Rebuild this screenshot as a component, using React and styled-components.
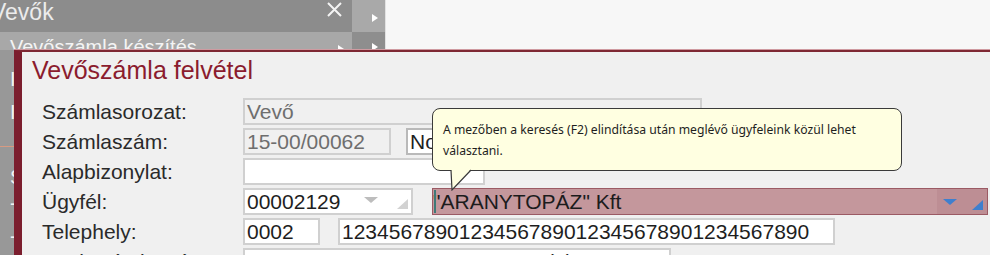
import React from "react"
import styled, { createGlobalStyle } from "styled-components"

//Styles
const GlobalStyle = createGlobalStyle`
  body {
    margin: 0;
    background: #f0f0f0;
  }
`
const Screen = styled.div`
  position: relative;
  width: 990px;
  height: 255px;
  overflow: hidden;
  display: flex;
  flex-direction: column;
  background: #f0f0f0;
  font-family: "Liberation Sans", Arial, sans-serif;
`
const TopBar = styled.div`
  display: flex;
  height: 50px;
  flex-shrink: 0;
`
const MenuPanel = styled.div`
  width: 352px;
  display: flex;
  flex-direction: column;
`
const MenuHeader = styled.div`
  height: 32px;
  background: #8c8c8c;
  display: flex;
  justify-content: space-between;
  align-items: flex-start;
  padding-right: 9px;
  color: #ececec;
  overflow: hidden;
`
const MenuTitle = styled.span`
  font-size: 23px;
  line-height: 26px;
  margin-left: -9px;
  margin-top: -1px;
`
const CloseIcon = styled.svg`
  margin-top: 1px;
`
const MenuSub = styled.div`
  height: 18px;
  background: #a8a8a8;
  overflow: hidden;
  display: flex;
  justify-content: space-between;
  padding: 3px 8px 0 10px;
  box-sizing: border-box;
  color: #f4f4f4;
  font-size: 20px;
  line-height: 24px;
`
const Arrow = styled.svg`
  display: block;
  margin-top: ${props => props.$top || 0}px;
  flex-shrink: 0;
`
const Strip = styled.div`
  width: 33px;
  display: flex;
  flex-direction: column;
  border-right: 1px solid #e2e2e2;
`
const StripCell = styled.div`
  height: ${props => props.$h}px;
  background: ${props => (props.$dark ? "#8e8e8e" : "#a9a9a9")};
  display: flex;
  justify-content: flex-end;
  padding-right: 7px;
  overflow: hidden;
`
const Rest = styled.div`
  flex: 1;
  background: #f7f7f7;
`
const Main = styled.div`
  display: flex;
  flex: 1;
  min-height: 0;
`
const SideMenu = styled.div`
  width: 14px;
  flex-shrink: 0;
  background: #989898;
  overflow: hidden;
  display: flex;
  flex-direction: column;
  padding-top: 13px;
  box-sizing: border-box;
`
const SideItem = styled.div`
  height: ${props => props.$h}px;
  margin-top: ${props => props.$mt || 0}px;
  line-height: ${props => props.$h}px;
  padding-left: 10px;
  color: #f2f2f2;
  font-size: 20px;
  white-space: nowrap;
  flex-shrink: 0;
`
const SideSeparator = styled.div`
  height: 1px;
  margin-top: 17px;
  background: #d79a82;
  flex-shrink: 0;
`
const Dialog = styled.div`
  flex: 1;
  background: #f0f0f0;
  border-left: 8px solid #7b1e2e;
  border-top: 2px solid #7f2834;
  box-shadow: 0 -1px 0 #cf9aa0;
  padding-left: 10px;
`
const Title = styled.h1`
  margin: 4px 0 0;
  font-size: 25px;
  line-height: 28px;
  font-weight: normal;
  color: #8b1c2e;
`
const FormGrid = styled.div`
  margin-top: 14px;
  padding-left: 10px;
  display: flex;
  flex-direction: column;
  gap: 3px;
`
const Row = styled.div`
  display: flex;
  align-items: center;
  height: 27px;
`
const Label = styled.div`
  width: 201px;
  flex-shrink: 0;
  font-size: 21px;
  line-height: 27px;
  color: #2a2a2a;
  white-space: nowrap;
`
const Field = styled.div`
  width: ${props => props.$w}px;
  margin-left: ${props => props.$ml || 0}px;
  height: 27px;
  box-sizing: border-box;
  border: 2px solid ${props => (props.$strong ? "#b9b9b9" : "#d0d0d0")};
  background: ${props => (props.$readonly ? "#f0f0f0" : "#ffffff")};
  color: ${props => (props.$readonly ? "#6e6e6e" : "#1e1e1e")};
  font-size: 21px;
  line-height: 23px;
  padding-left: 2px;
  display: flex;
  align-items: center;
  white-space: nowrap;
  overflow: hidden;
  flex-shrink: 0;
`
const FieldText = styled.span`
  flex: 1;
`
const FieldIcons = styled.div`
  display: flex;
  align-items: flex-end;
  align-self: stretch;
  padding: 0 ${props => props.$pr}px 4px ${props => props.$pl || 0}px;
  gap: ${props => props.$gap}px;
  background: ${props => props.$bg || "transparent"};
`
const IconSlot = styled.div`
  display: flex;
  margin-bottom: ${props => props.$mb || 0}px;
  svg {
    display: block;
  }
`
const NameField = styled.div`
  position: relative;
  width: 556px;
  margin-left: 19px;
  height: 27px;
  box-sizing: border-box;
  border: 1px solid #9b5a64;
  background: #c4979c;
  color: #1c1c1c;
  font-size: 21px;
  line-height: 25px;
  display: flex;
  white-space: nowrap;
`
const Caret = styled.span`
  position: absolute;
  left: 1px;
  top: 1px;
  bottom: 1px;
  width: 2px;
  background: #3e7a78;
`
const Tooltip = styled.div`
  position: absolute;
  left: 432px;
  top: 108px;
  width: 470px;
  height: 63px;
  box-sizing: border-box;
  background: #ffffe1;
  border: 1px solid #3a3a3a;
  border-radius: 8px;
  padding: 10px 0 0 10px;
  font-family: "Noto Sans", "Open Sans", sans-serif;
  font-size: 12.2px;
  line-height: 21px;
  color: #1e1e1e;
  white-space: nowrap;
`
const TooltipTail = styled.svg`
  position: absolute;
  left: 17px;
  top: 60px;
`

const Tri = ({ color, dir }) => {
  if (dir === "down")
    return (
      <svg width="14" height="6" viewBox="0 0 14 6">
        <path d="M0 0 L14 0 L7 6 Z" fill={color} />
      </svg>
    )
  return (
    <svg width="11" height="10" viewBox="0 0 11 10">
      <path d="M11 0 L11 10 L0 10 Z" fill={color} />
    </svg>
  )
}

const RightArrow = ({ top }) => (
  <Arrow $top={top} width="6" height="8" viewBox="0 0 6 8">
    <path d="M0 0 L6 4 L0 8 Z" fill="#ffffff" />
  </Arrow>
)

const App = () => (
  <Screen>
    <GlobalStyle />
    <TopBar>
      <MenuPanel>
        <MenuHeader>
          <MenuTitle>Vevők</MenuTitle>
          <CloseIcon width="17" height="17" viewBox="0 0 17 17">
            <path
              d="M2 2 L15 15 M15 2 L2 15"
              stroke="#f4f4f4"
              strokeWidth="2"
            />
          </CloseIcon>
        </MenuHeader>
        <MenuSub>
          <span>Vevőszámla készítés</span>
          <RightArrow top={10} />
        </MenuSub>
      </MenuPanel>
      <Strip>
        <StripCell $h={32}>
          <RightArrow top={14} />
        </StripCell>
        <StripCell $h={18} $dark>
          <RightArrow top={11} />
        </StripCell>
      </Strip>
      <Rest />
    </TopBar>
    <Main>
      <SideMenu>
        <SideItem $h={33}>Irányítópult</SideItem>
        <SideItem $h={33}>Iktatás</SideItem>
        <SideSeparator />
        <SideItem $h={33} $mt={14}>
          Számlák
        </SideItem>
        <SideItem $h={18}>- Lista</SideItem>
        <SideItem $h={48}>- Új</SideItem>
      </SideMenu>
      <Dialog>
        <Title>Vevőszámla felvétel</Title>
        <FormGrid>
          <Row>
            <Label>Számlasorozat:</Label>
            <Field $w={459} $readonly>
              Vevő
            </Field>
          </Row>
          <Row>
            <Label>Számlaszám:</Label>
            <Field $w={148} $readonly>
              15-00/00062
            </Field>
            <Field $w={180} $ml={15} $strong>
              Normál
            </Field>
          </Row>
          <Row>
            <Label>Alapbizonylat:</Label>
            <Field $w={242} />
          </Row>
          <Row>
            <Label>Ügyfél:</Label>
            <Field $w={170}>
              <FieldText>00002129</FieldText>
              <FieldIcons $gap={19} $pr={3}>
                <IconSlot $mb={6}>
                  <Tri dir="down" color="#bdbdbd" />
                </IconSlot>
                <IconSlot>
                  <Tri color="#d2d2d2" />
                </IconSlot>
              </FieldIcons>
            </Field>
            <NameField>
              <FieldText>"ARANYTOPÁZ" Kft</FieldText>
              <FieldIcons $gap={15} $bg="#bd8e94" $pl={6} $pr={4}>
                <IconSlot $mb={5}>
                  <Tri dir="down" color="#3f7fce" />
                </IconSlot>
                <IconSlot>
                  <Tri color="#3f7fce" />
                </IconSlot>
              </FieldIcons>
              <Caret />
            </NameField>
          </Row>
          <Row>
            <Label>Telephely:</Label>
            <Field $w={77}>0002</Field>
            <Field $w={497} $ml={18}>
              1234567890123456789012345678901234567890
            </Field>
          </Row>
          <Row>
            <Label>Bankszámlaszám:</Label>
            <Field $w={428}>10000007-56410024-00000000 (1)</Field>
          </Row>
        </FormGrid>
      </Dialog>
    </Main>
    <Tooltip>
      A mezőben a keresés (F2) elindítása után meglévő ügyfeleink közül lehet
      <br />
      választani.
      <TooltipTail width="22" height="22" viewBox="0 0 22 22">
        <path d="M1 0 L2 21 L21 0 Z" fill="#ffffe1" />
        <path
          d="M1 1 L2 21 L21 1"
          fill="none"
          stroke="#3a3a3a"
          strokeWidth="1.2"
        />
      </TooltipTail>
    </Tooltip>
  </Screen>
)

export default App
